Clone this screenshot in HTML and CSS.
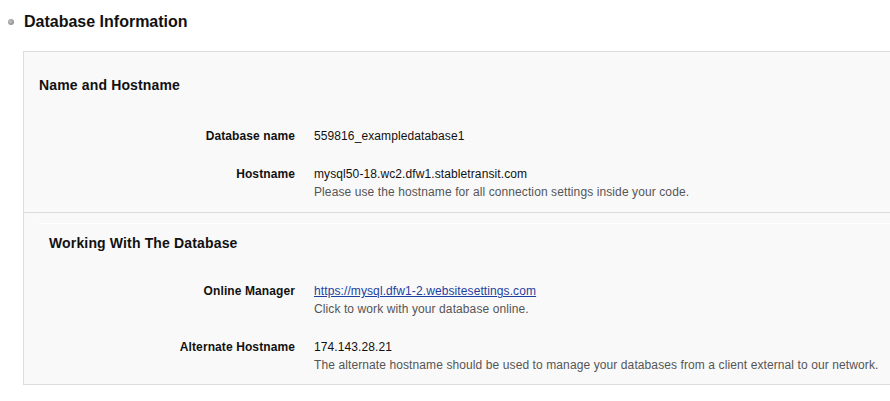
FILE: index.html
```html
<!DOCTYPE html>
<html>
<head>
<meta charset="utf-8">
<link rel="stylesheet" href="styles.css">
</head>
<body>
<div class="page">
  <div class="title-row">
    <span class="dot"></span>
    <h2 class="title">Database Information</h2>
  </div>
  <div class="panel">
    <div class="section first">
      <h3 class="sec-title">Name and Hostname</h3>
      <div class="rows">
        <div class="row">
          <div class="label">Database name</div>
          <div class="value">559816_exampledatabase1</div>
        </div>
        <div class="row">
          <div class="label">Hostname</div>
          <div class="value">mysql50-18.wc2.dfw1.stabletransit.com<div class="hint">Please use the hostname for all connection settings inside your code.</div></div>
        </div>
      </div>
    </div>
    <div class="section second">
      <div class="inner">
        <h3 class="sec-title">Working With The Database</h3>
        <div class="rows">
          <div class="row">
            <div class="label">Online Manager</div>
            <div class="value"><a class="link" href="#">https://mysql.dfw1-2.websitesettings.com</a><div class="hint">Click to work with your database online.</div></div>
          </div>
          <div class="row">
            <div class="label">Alternate Hostname</div>
            <div class="value">174.143.28.21<div class="hint">The alternate hostname should be used to manage your databases from a client external to our network.</div></div>
          </div>
        </div>
      </div>
    </div>
  </div>
</div>
</body>
</html>
```

FILE: styles.css
```css
html, body {
  margin: 0;
  padding: 0;
  background: #fff;
  overflow: hidden;
}
body {
  font-family: "Liberation Sans", Arial, Helvetica, sans-serif;
  color: #000;
  width: 890px;
  height: 401px;
}
.page {
  padding-top: 10px;
}
.title-row {
  display: flex;
  align-items: center;
  height: 22px;
  padding-left: 8px;
}
.dot {
  width: 6px;
  height: 6px;
  border-radius: 50%;
  background: radial-gradient(circle at 40% 40%, #c4c4c4, #7a7a7a);
  margin-right: 10px;
  margin-top: 1px;
}
.title {
  margin: 0;
  font-size: 16px;
  font-weight: bold;
  line-height: 22px;
  color: #111;
  padding-top: 1px;
}
.panel {
  margin-top: 19px;
  margin-left: 23px;
  width: 900px;
  background: #f9f9f9;
  border: 1px solid #dcdcdc;
}
.sec-title {
  margin: 0;
  font-size: 14px;
  font-weight: bold;
  line-height: 18px;
  color: #111;
  letter-spacing: 0.15px;
}
.section.first {
  padding: 24px 0 11px 15px;
}
.section.first .sec-title {
  margin-bottom: 33px;
}
.section.first .rows {
  --label-w: 256px;
}
.section.second {
  border-top: 1px solid #dcdcdc;
  padding: 10px 0 10px 15px;
}
.inner {
  border-top: 1px solid #fff;
  padding: 10px 0 0 10px;
}
.inner .sec-title {
  margin-bottom: 30px;
}
.inner .rows {
  --label-w: 246px;
}
.rows {
  display: flex;
  flex-direction: column;
  gap: 20px;
}
.row {
  display: grid;
  grid-template-columns: var(--label-w) 1fr;
  column-gap: 19px;
  font-size: 12px;
  line-height: 18px;
  letter-spacing: 0.1px;
}
.label {
  text-align: right;
  font-weight: bold;
  color: #111;
}
.value {
  color: #111;
}
.hint {
  color: #555;
}
.link {
  color: #1e3fa0;
  text-decoration: underline;
}
```
